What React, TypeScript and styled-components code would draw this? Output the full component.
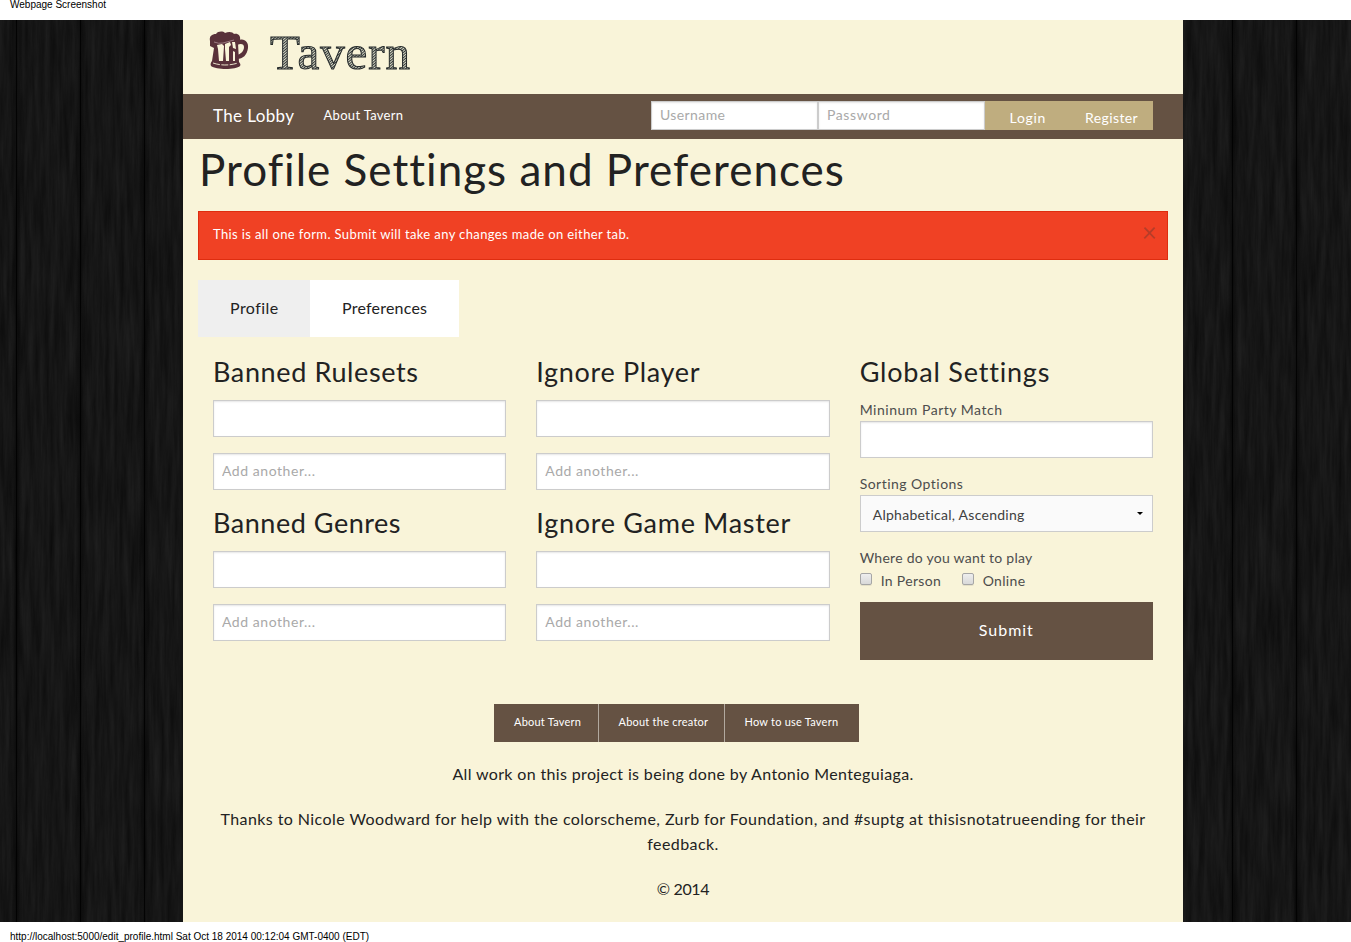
import React from "react";
import styled, { createGlobalStyle } from "styled-components";

const colors = {
  cream: "#f9f4d9",
  brown: "#655243",
  tan: "#bfad7f",
  ink: "#222222",
  label: "#4d4d4d",
  border: "#cccccc",
};

const GlobalStyle = createGlobalStyle`
  *, *::before, *::after { box-sizing: border-box; }
  body { margin: 0; background: #fff; color: ${colors.ink}; font-family: Lato, sans-serif; font-size: 16px; }
  h1, h2, p { margin: 0; font-weight: 400; }
  a { color: inherit; text-decoration: none; }
  input, select, button { font-family: inherit; margin: 0; }
`;

const Sheet = styled.div`
  display: flex;
  flex-direction: column;
  width: 1351px;
  height: 942px;
  overflow: hidden;
`;

const PrintLine = styled.div<{ $bottom?: boolean }>`
  height: 20px;
  padding-left: 10px;
  font: 10px/${(p) => (p.$bottom ? "29px" : "10px")} "Liberation Sans", sans-serif;
  white-space: nowrap;
  color: #000;
`;

const Viewport = styled.div`
  display: flex;
  height: 902px;
`;

const WoodPanel = styled.div<{ $width: number }>`
  width: ${(p) => p.$width}px;
  height: 902px;
  background: #141414;
  svg { display: block; }
`;

const Page = styled.main`
  display: flex;
  flex-direction: column;
  width: 1000px;
  background: ${colors.cream};
`;

const Header = styled.header`
  height: 74px;
  svg { display: block; }
`;

const NavBar = styled.nav`
  display: flex;
  align-items: flex-start;
  height: 45px;
  padding: 0 30px;
  background: ${colors.brown};
  color: #fff;
`;

const Brand = styled.a`
  width: 110.5px;
  font-size: 17px;
  line-height: 43px;
  letter-spacing: 0.37px;
`;

const NavLink = styled.a`
  flex: 1;
  font-size: 13px;
  line-height: 43px;
  letter-spacing: 0.31px;
`;

const LoginForm = styled.form`
  display: flex;
  height: 29px;
  margin-top: 7px;
`;

const TextInput = styled.input<{ $track?: number }>`
  display: block;
  width: 100%;
  height: 37px;
  padding: 0 8px 2px;
  border: 1px solid ${colors.border};
  border-radius: 0;
  background: #fff;
  box-shadow: inset 0 1px 2px rgba(0, 0, 0, 0.1);
  font-size: 14px;
  letter-spacing: ${(p) => p.$track ?? 0.55}px;
  color: rgba(0, 0, 0, 0.75);
  &::placeholder { color: #a9a9a9; opacity: 1; }
`;

const LoginInput = styled(TextInput)`
  width: 167px;
  height: 29px;
`;

const LoginButton = styled.button<{ $width: number; $indent: number; $track: number }>`
  width: ${(p) => p.$width}px;
  height: 29px;
  padding: 4px 0 0 ${(p) => p.$indent}px;
  border: 0;
  background: ${colors.tan};
  color: #fff;
  font-size: 14px;
  letter-spacing: ${(p) => p.$track}px;
  text-align: left;
`;

const Content = styled.div`
  padding: 0 15px;
`;

const Title = styled.h1`
  height: 72px;
  padding: 0 0 0 1px;
  font-size: 44px;
  line-height: 61px;
  letter-spacing: 1.02px;
  white-space: nowrap;
`;

const Alert = styled.div`
  display: flex;
  justify-content: space-between;
  height: 49px;
  padding: 0 10px 0 14px;
  border: 1px solid #de2d0f;
  background: #f04124;
  color: #fff;
  font-size: 13px;
  line-height: 44px;
  letter-spacing: 0.378px;
`;

const CloseButton = styled.button`
  height: 40px;
  padding: 0;
  border: 0;
  background: none;
  color: #333;
  opacity: 0.3;
  font-size: 26px;
  line-height: 36px;
`;

const Tabs = styled.div`
  display: flex;
  margin-top: 20px;
`;

const Tab = styled.button<{ $active?: boolean }>`
  width: ${(p) => (p.$active ? 149 : 112)}px;
  height: 57px;
  padding: 0 0 2px 32px;
  border: 0;
  background: ${(p) => (p.$active ? "#fff" : "#efefef")};
  color: ${colors.ink};
  font-size: 16px;
  letter-spacing: ${(p) => (p.$active ? 0.215 : 0.46)}px;
  text-align: left;
`;

const Columns = styled.div`
  display: grid;
  grid-template-columns: repeat(3, 1fr);
  column-gap: 30px;
  padding: 18px 15px 0;
`;

const Column = styled.section`
  height: 305px;
`;

const SectionTitle = styled.h2<{ $track: number }>`
  height: 45px;
  font-size: 27px;
  line-height: 34px;
  letter-spacing: ${(p) => p.$track}px;
  white-space: nowrap;
`;

const Field = styled.div`
  margin-bottom: 16px;
`;

const Label = styled.label<{ $track: number }>`
  display: block;
  height: 21px;
  color: ${colors.label};
  font-size: 14px;
  line-height: 19px;
  letter-spacing: ${(p) => p.$track}px;
`;

const SelectBox = styled.div`
  display: flex;
  align-items: center;
  justify-content: space-between;
  height: 37px;
  padding: 1px 9px 0 12px;
  border: 1px solid ${colors.border};
  background: #fafafa;
  color: #404040;
  font-size: 14px;
  letter-spacing: 0.27px;
  svg { display: block; margin-top: -2px; }
`;

const Checks = styled.div`
  display: flex;
  height: 33px;
`;

const CheckLabel = styled.label<{ $width: number }>`
  display: flex;
  gap: 9px;
  width: ${(p) => p.$width}px;
  color: ${colors.label};
  font-size: 14px;
  line-height: 24px;
  letter-spacing: 0.33px;
`;

const Checkbox = styled.input`
  appearance: none;
  width: 12px;
  height: 12px;
  margin-top: 4px;
  border: 1px solid #a6a6a6;
  border-radius: 2px;
  background: linear-gradient(#eeeeee, #d9d9d9);
  box-shadow: 0 1px 0 rgba(0, 0, 0, 0.08);
`;

const Submit = styled.button`
  display: block;
  width: 100%;
  height: 58px;
  padding: 0 0 3px;
  border: 0;
  background: ${colors.brown};
  color: #fff;
  font-size: 16px;
  letter-spacing: 0.97px;
`;

const Footer = styled.footer`
  display: flex;
  flex-direction: column;
  align-items: center;
  padding: 44px 15px 0;
  text-align: center;
`;

const FooterNav = styled.nav`
  display: flex;
  height: 38px;
  margin-right: 13px;
  background: ${colors.brown};
  color: #fff;
`;

const FooterLink = styled.a<{ $width: number }>`
  width: ${(p) => p.$width}px;
  padding-left: 20px;
  font-size: 11px;
  line-height: 36px;
  letter-spacing: 0.23px;
  text-align: left;
  white-space: nowrap;
  & + & { border-left: 1px solid #b2a99f; padding-left: 19.5px; }
`;

const Notes = styled.div`
  margin-top: -1px;
`;

const Note = styled.p<{ $track: number }>`
  margin-top: 20px;
  line-height: 25px;
  letter-spacing: ${(p) => p.$track}px;
`;

function Wood({ width, groove, seed }: { width: number; groove: number; seed: number }) {
  const id = `wood${seed}`;
  const grooves: number[] = [];
  for (let x = groove; x < width; x += 64) grooves.push(x);
  return (
    <WoodPanel $width={width}>
      <svg width={width} height="902">
        <defs>
          <filter id={id} x="0" y="0" width="100%" height="100%" colorInterpolationFilters="sRGB">
            <feTurbulence type="fractalNoise" baseFrequency="0.2 0.014" numOctaves="5" seed={seed} />
            <feColorMatrix values="0.085 0 0 0 0.043  0.085 0 0 0 0.043  0.085 0 0 0 0.043  0 0 0 0 1" />
          </filter>
          <linearGradient id={`${id}g`}>
            <stop offset="0" stopColor="#000" stopOpacity="0" />
            <stop offset="0.4" stopColor="#000" stopOpacity="0.3" />
            <stop offset="0.5" stopColor="#000" stopOpacity="0.9" />
            <stop offset="0.6" stopColor="#000" stopOpacity="0.3" />
            <stop offset="1" stopColor="#000" stopOpacity="0" />
          </linearGradient>
        </defs>
        <rect width={width} height="902" filter={`url(#${id})`} />
        {grooves.map((x) => (
          <rect key={x} x={x - 5} width="11" height="902" fill={`url(#${id}g)`} />
        ))}
      </svg>
    </WoodPanel>
  );
}

function Logo() {
  return (
    <svg width="260" height="74" viewBox="0 0 260 74">
      <defs>
        <pattern id="hatch" width="2" height="2" patternUnits="userSpaceOnUse" patternTransform="rotate(-40)">
          <rect width="2" height="2" fill="#dcdcc8" />
          <rect width="2" height="0.95" fill="#2a3032" />
        </pattern>
      </defs>
      <path
        d="M27 21c-1-5 2-7 6-7 2-3 7-3 9-1 4-2 8-1 9 1 4-1 7 2 6 6l-2 3 1 19c1 1 2 3 1 4-4 4-24 4-29 0-1-2 0-4 1-5l2-13-4-2z"
        fill="#59313a"
      />
      <path d="M54 21c6-4 12 0 11 7-1 7-5 11-11 11v-4c4-1 7-4 7-8 0-3-3-4-7-2z" fill="#59313a" />
      <g fill={colors.cream}>
        <path d="M34 25l5-1 2 2-1 15h-4l-1-12z" />
        <path d="M42 24l5-2 1 3-2 2v14h-3l-1-12z" />
        <path d="M49 22l3 0 1 7-3-1z" />
        <path d="M50 31l2 1v9h-2z" />
      </g>
      <path d="M31 22q5 2 9 1l11-3" fill="none" stroke="#b99ba0" strokeWidth="0.7" />
      <path d="M30 43q12 4 25 0" fill="none" stroke={colors.cream} strokeWidth="0.9" strokeDasharray="7 1.5" />
      <text
        x="87"
        y="49"
        textLength="140"
        lengthAdjust="spacing"
        fontFamily="'Liberation Serif', serif"
        fontSize="49"
        fill="url(#hatch)"
        stroke="#24292a"
        strokeWidth="1"
      >
        Tavern
      </text>
    </svg>
  );
}

function BanList({ title, track }: { title: string; track: number }) {
  return (
    <>
      <SectionTitle $track={track}>{title}</SectionTitle>
      <Field><TextInput /></Field>
      <Field><TextInput placeholder="Add another..." /></Field>
    </>
  );
}

export default function App() {
  return (
    <Sheet>
      <GlobalStyle />
      <PrintLine>Webpage Screenshot</PrintLine>
      <Viewport>
        <Wood width={183} groove={16} seed={4} />
        <Page>
          <Header><Logo /></Header>
          <NavBar>
            <Brand href="#">The Lobby</Brand>
            <NavLink href="#">About Tavern</NavLink>
            <LoginForm>
              <LoginInput placeholder="Username" $track={0.4} />
              <LoginInput placeholder="Password" $track={0.6} />
              <LoginButton type="button" $width={83} $indent={24.5} $track={0.7}>Login</LoginButton>
              <LoginButton type="button" $width={85} $indent={17} $track={0.4}>Register</LoginButton>
            </LoginForm>
          </NavBar>
          <Content>
            <Title>Profile Settings and Preferences</Title>
            <Alert>
              This is all one form. Submit will take any changes made on either tab.
              <CloseButton>×</CloseButton>
            </Alert>
            <Tabs>
              <Tab>Profile</Tab>
              <Tab $active>Preferences</Tab>
            </Tabs>
            <Columns>
              <Column>
                <BanList title="Banned Rulesets" track={0.62} />
                <BanList title="Banned Genres" track={0.53} />
              </Column>
              <Column>
                <BanList title="Ignore Player" track={0.67} />
                <BanList title="Ignore Game Master" track={0.71} />
              </Column>
              <Column>
                <SectionTitle $track={0.8}>Global Settings</SectionTitle>
                <Field>
                  <Label $track={0.52}>Mininum Party Match</Label>
                  <TextInput />
                </Field>
                <Field>
                  <Label $track={0.47}>Sorting Options</Label>
                  <SelectBox>
                    Alphabetical, Ascending
                    <svg width="6" height="3"><path d="M0 0h6L3 3z" fill="#000" /></svg>
                  </SelectBox>
                </Field>
                <Label $track={0.26}>Where do you want to play</Label>
                <Checks>
                  <CheckLabel $width={102}><Checkbox type="checkbox" />In Person</CheckLabel>
                  <CheckLabel $width={90}><Checkbox type="checkbox" />Online</CheckLabel>
                </Checks>
                <Submit>Submit</Submit>
              </Column>
            </Columns>
          </Content>
          <Footer>
            <FooterNav>
              <FooterLink href="#" $width={104}>About Tavern</FooterLink>
              <FooterLink href="#" $width={126}>About the creator</FooterLink>
              <FooterLink href="#" $width={135}>How to use Tavern</FooterLink>
            </FooterNav>
            <Notes>
              <Note $track={0.355}>All work on this project is being done by Antonio Menteguiaga.</Note>
              <Note $track={0.425}>
                Thanks to Nicole Woodward for help with the colorscheme, Zurb for Foundation, and #suptg at
                thisisnotatrueending for their feedback.
              </Note>
              <Note $track={-0.35}>© 2014</Note>
            </Notes>
          </Footer>
        </Page>
        <Wood width={168} groove={49} seed={11} />
      </Viewport>
      <PrintLine $bottom>http://localhost:5000/edit_profile.html Sat Oct 18 2014 00:12:04 GMT-0400 (EDT)</PrintLine>
    </Sheet>
  );
}
